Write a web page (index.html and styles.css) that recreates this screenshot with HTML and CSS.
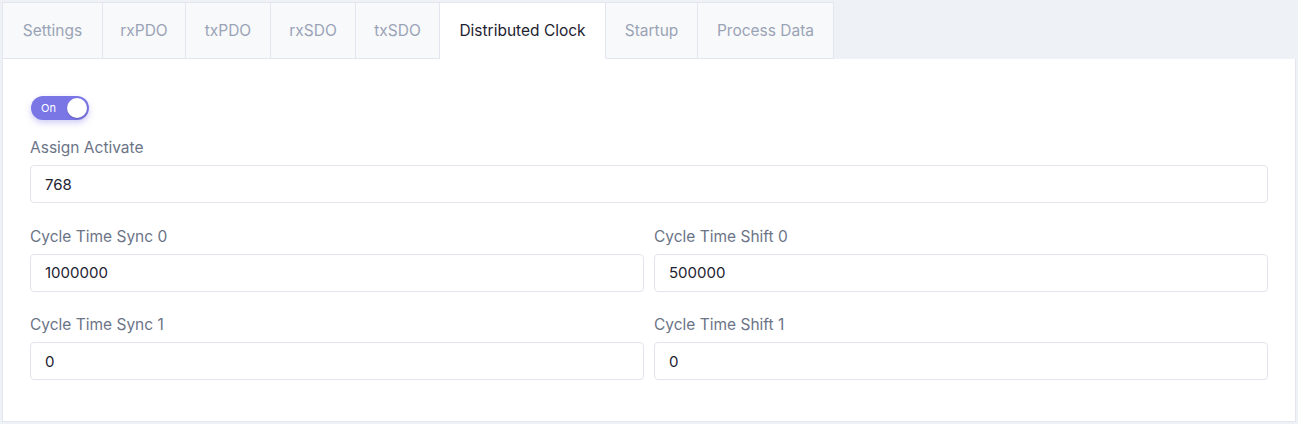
FILE: index.html
```html
<!DOCTYPE html>
<html>
<head>
<meta charset="utf-8">
<link rel="stylesheet" href="styles.css">
</head>
<body>
<div class="page">
  <div class="tabs">
    <div class="tab tab-settings">Settings</div>
    <div class="tab tab-rxpdo">rxPDO</div>
    <div class="tab tab-txpdo">txPDO</div>
    <div class="tab tab-rxsdo">rxSDO</div>
    <div class="tab tab-txsdo">txSDO</div>
    <div class="tab tab-dc active">Distributed Clock</div>
    <div class="tab tab-startup">Startup</div>
    <div class="tab tab-pd">Process Data</div>
  </div>
  <div class="panel">
    <div class="toggle"><span class="toggle-label">On</span><span class="knob"></span></div>
    <div class="field">
      <label class="label">Assign Activate</label>
      <div class="input">768</div>
    </div>
    <div class="row">
      <div class="field">
        <label class="label">Cycle Time Sync 0</label>
        <div class="input">1000000</div>
      </div>
      <div class="field">
        <label class="label">Cycle Time Shift 0</label>
        <div class="input">500000</div>
      </div>
    </div>
    <div class="row">
      <div class="field">
        <label class="label">Cycle Time Sync 1</label>
        <div class="input">0</div>
      </div>
      <div class="field">
        <label class="label">Cycle Time Shift 1</label>
        <div class="input">0</div>
      </div>
    </div>
  </div>
</div>
</body>
</html>
```

FILE: styles.css
```css
* { box-sizing: border-box; }
html, body { margin: 0; padding: 0; }
body {
  background: #eef1f6;
  font-family: Inter, "Noto Sans", sans-serif;
  font-size: 15px;
  width: 1298px;
  height: 424px;
  overflow: hidden;
}
.page { padding: 2px 2px 0 2px; }
.tabs {
  display: flex;
  align-self: flex-start;
  width: max-content;
  border-top: 1px solid #e3e6ee;
  border-left: 1px solid #e3e6ee;
  height: 57px;
}
.tab {
  display: flex;
  align-items: center;
  justify-content: center;
  font-size: 15.5px;
  background: #f8f9fb;
  color: #9aa3b6;
  border-right: 1px solid #e3e6ee;
  border-bottom: 1px solid #e3e6ee;
  white-space: nowrap;
}
.tab-settings { width: 100px; }
.tab-rxpdo { width: 83px; }
.tab-txpdo { width: 85px; }
.tab-rxsdo { width: 85px; }
.tab-txsdo { width: 84px; }
.tab-dc { width: 166px; }
.tab-startup { width: 92px; }
.tab-pd { width: 136px; }
.tab.active {
  background: #ffffff;
  color: #1d2230;
  border-bottom-color: #ffffff;
}
.panel {
  background: #ffffff;
  border: 1px solid #e3e6ee;
  border-top: none;
  width: 1294px;
  height: 363px;
  padding: 37px 27px 0 27px;
}
.toggle {
  width: 58px;
  height: 24px;
  border-radius: 12px;
  background: #7a76e6;
  display: flex;
  align-items: center;
  justify-content: space-between;
  padding: 0 2px 0 10px;
  margin-left: 1px;
  margin-bottom: 17px;
  box-shadow: 0 3px 6px rgba(122, 118, 230, 0.35);
}
.toggle-label {
  color: #ffffff;
  font-size: 11px;
  line-height: 1;
}
.knob {
  width: 20px;
  height: 20px;
  border-radius: 50%;
  background: #ffffff;
  box-shadow: 0 1px 2px rgba(0,0,0,0.2);
}
.field {
  display: flex;
  flex-direction: column;
  margin-bottom: 22.5px;
  flex: 1;
}
.label {
  color: #6b7487;
  font-size: 15.5px;
  height: 20px;
  line-height: 21px;
  margin-bottom: 8px;
}
.input {
  height: 38px;
  border: 1px solid #e2e5ee;
  border-radius: 4px;
  padding: 0 14px;
  display: flex;
  align-items: center;
  color: #1d2230;
}
.row {
  display: flex;
  gap: 10px;
}
```
